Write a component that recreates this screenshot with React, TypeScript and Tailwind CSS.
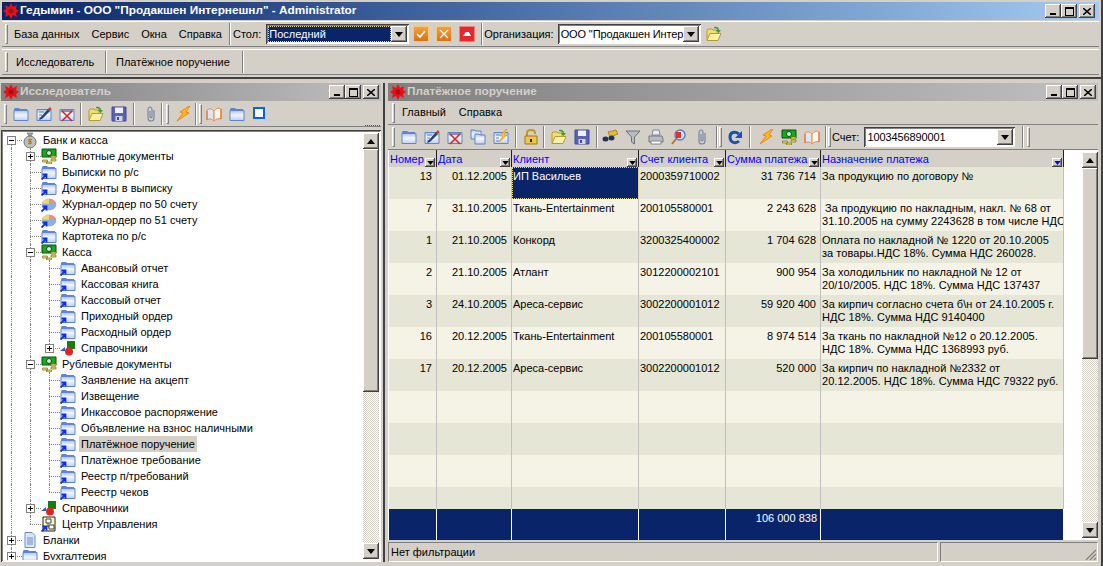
import type { ReactNode } from "react";

const raised =
  "bg-[#d4d0c8] shadow-[inset_-1px_-1px_#404040,inset_1px_1px_#ffffff,inset_-2px_-2px_#808080]";
const sunken = "shadow-[inset_1px_1px_#404040,inset_-1px_-1px_#ffffff,inset_2px_2px_#808080]";

const folderShape = (
  <>
    <path d="M1 5V3l1-1h4l1 1h7v2z" fill="#5a84d8" />
    <path d="M1 4.5h14v10H1z" fill="url(#fld)" stroke="#5f86cf" />
  </>
);

const icons: Record<string, ReactNode> = {
  folder: folderShape,
  edit: (
    <>
      <path d="M1 3.5h14v11H1z" fill="url(#fld)" stroke="#5f86cf" />
      <path d="M3 6h5M3 9h3M3 12h2" stroke="#5f86cf" />
      <path d="M4 12L12 3l2 2-8 8-3 1z" fill="#24407c" />
      <path d="M12 3l2 2 1.5-2L14 1z" fill="#e03020" />
    </>
  ),
  del: (
    <>
      <path d="M1 3.5h14v11H1z" fill="url(#fld)" stroke="#5f86cf" />
      <path d="M2 5h12" stroke="#8a6a9a" strokeWidth="1.5" />
      <path d="M3 5l10 10M13 5L3 15" stroke="#e02018" strokeWidth="1.5" />
    </>
  ),
  copy: (
    <>
      <path d="M1 3V1h4l1 1h5v8H1z" fill="url(#fld)" stroke="#5f86cf" />
      <path d="M5 7V5h4l1 1h5v9H5z" fill="url(#fld)" stroke="#5f86cf" />
    </>
  ),
  boltfolder: (
    <>
      <path d="M1 3.5h14v11H1z" fill="url(#fld)" stroke="#5f86cf" />
      <path d="M3 6h4M3 9h3M3 12h3" stroke="#5f86cf" />
      <path d="M13 0L7 7h3L6 13l8-7h-3l3-6z" fill="#ffc820" stroke="#e07010" strokeWidth=".5" />
    </>
  ),
  open: (
    <>
      <path d="M1 14V4l1-1h4l1 1h4v3" fill="#f5dc70" stroke="#b89a30" />
      <path d="M1 14.5l3-7h11l-3 7z" fill="#fdf0a8" stroke="#b89a30" />
      <path d="M8 1c3-1 5 1 5 3h2l-2.500 3L10 4h1.500c0-1-1.500-2-3.500-2z" fill="#30a030" />
    </>
  ),
  save: (
    <>
      <path d="M1 1h14v14H1z" fill="#5a62b4" stroke="#40489c" />
      <path d="M4 1.500h8V7H4z" fill="#eef0fa" />
      <path d="M4.500 10h7v5h-7z" fill="#d0d4ec" />
      <path d="M6 11h2v3H6z" fill="#40489c" />
    </>
  ),
  clip: (
    <path
      d="M11 4v8c0 2-1 3-3 3s-3-1-3-3V4c0-2 1-3 2-3s2 1 2 3v7c0 1-2 1-2 0V5"
      fill="none"
      stroke="#7488ac"
      strokeWidth="1.2"
    />
  ),
  bolt: <path d="M14 0L5 6l3 1-6 8 12-8-3-1 4-6z" fill="#ffb818" stroke="#ee6a10" strokeWidth=".7" />,
  book: (
    <>
      <path d="M1 4c3-2 5-1 7 1v10c-2-2-4-3-7-1z" fill="#dbe8fa" stroke="#ee8a40" />
      <path d="M15 3c-3-2-5 0-7 2v10c2-2 4-3 7-2z" fill="#fdf6ea" stroke="#ee8a40" />
      <path d="M1 5v9M15 3v10" stroke="#e86c20" />
    </>
  ),
  windows: (
    <>
      <path d="M5 5h10v10H5z" fill="#bcd6fa" />
      <path d="M2 2h10v10H2z" fill="#ffffff" stroke="#1060e0" strokeWidth="2" />
    </>
  ),
  bag: (
    <>
      <path d="M5 1h6l-2 3H7z" fill="#a8a8a0" stroke="#606060" strokeWidth=".6" />
      <circle cx="8" cy="10" r="6" fill="#c0c0b8" stroke="#707070" />
      <path d="M10 7.500H7v2h2v2H6M8 6.500v6" stroke="#c87808" fill="none" strokeWidth="1.2" />
    </>
  ),
  money: (
    <>
      <path d="M1 1h14v8H1z" fill="#18a818" stroke="#065010" />
      <circle cx="8" cy="5" r="2.500" fill="#d0f4d0" stroke="#065010" />
      <path d="M1.500 12h5v2h-5zM5.500 14h5v2h-5zM10 8h5v2h-5zM10 11h5v2h-5z" fill="#eeda50" stroke="#706010" strokeWidth=".6" />
    </>
  ),
  pie: (
    <>
      <ellipse cx="8" cy="8.500" rx="7" ry="5.500" fill="#8cb0e0" stroke="#7a90b0" strokeWidth=".5" />
      <path d="M8 8V3A7 5.500 0 0 0 1 7.500z" fill="#f0d860" />
      <path d="M8 8V3A7 5.500 0 0 1 15 8z" fill="#e09090" />
    </>
  ),
  shapes: (
    <>
      <path d="M7 1h8v8H7z" fill="#108010" />
      <path d="M0 11l5-4v4z" fill="#2060d0" />
      <circle cx="9" cy="11.500" r="4" fill="#e82020" />
    </>
  ),
  center: (
    <>
      <path d="M2 1h12v14H2z" fill="#fffbc0" stroke="#202020" />
      <path d="M5 3h5v4H5zM8 9h5v4H8z" fill="#ffffff" stroke="#404040" />
      <path d="M7 7v4h1" stroke="#404040" fill="none" />
    </>
  ),
  doc: (
    <>
      <path d="M3 .5h7l3 3v12H3z" fill="#dbe6f8" stroke="#6a8cc8" />
      <path d="M5 6h6M5 8h6M5 10h6M5 12h6" stroke="#6a8cc8" />
    </>
  ),
  lock: (
    <>
      <path d="M4 7V4c0-4 8-4 8 0v1" fill="none" stroke="#c09820" strokeWidth="2" />
      <path d="M2 7h12v8H2z" fill="#f0c840" stroke="#a07810" />
      <path d="M7 10h2v3H7z" fill="#302000" />
    </>
  ),
  binoculars: (
    <>
      <path d="M6 3l8-2 2 4-8 3z" fill="#f0b820" stroke="#806010" strokeWidth=".6" />
      <ellipse cx="3.500" cy="10" rx="3" ry="2.500" fill="#203060" />
      <ellipse cx="9.500" cy="9" rx="3" ry="2.500" fill="#203060" />
    </>
  ),
  funnel: <path d="M1 2h14L9.500 8v7l-3-2V8z" fill="#b8bcc4" stroke="#6a7078" />,
  printer: (
    <>
      <path d="M5 1h6l1 5H4z" fill="#e8ecf4" stroke="#808890" />
      <path d="M1 7h13l1 3v3H1z" fill="#b8bcc4" stroke="#707880" />
      <path d="M3 12h10v3H3z" fill="#ffffff" stroke="#808890" />
    </>
  ),
  search: (
    <>
      <circle cx="9" cy="6" r="5" fill="#d8e8f8" stroke="#5080b0" strokeWidth="1.400" />
      <path d="M5 3h5v6H5z" fill="#e03030" />
      <path d="M5 10l-4 5" stroke="#c07020" strokeWidth="2" />
    </>
  ),
  redo: (
    <>
      <path d="M12 12c-3 3-9 2-9-4 0-5 5-6 9-3" fill="none" stroke="#1850b8" strokeWidth="3" />
      <path d="M15 2v7H8z" fill="#1850b8" />
    </>
  ),
};

function Ico({ name, link, className = "" }: { name: string; link?: boolean; className?: string }) {
  return (
    <svg viewBox="0 0 16 16" className={`w-4 h-4 flex-none ${className}`}>
      {icons[name]}
      {link && <path d="M.5 15.500l4-4M1.500 10.500H5.500V14.500" fill="none" stroke="#0830e8" strokeWidth="1.800" />}
    </svg>
  );
}

function Logo() {
  return (
    <svg viewBox="0 0 16 16" className="w-4 h-4 flex-none">
      <path d="M8 0l2 4 4-2-1 4 3 2-3 2 1 4-4-2-2 4-2-4-4 2 1-4-3-2 3-2-1-4 4 2z" fill="#ee1010" />
      <circle cx="8" cy="8" r="2.500" fill="#a01020" />
    </svg>
  );
}

function CaptionButtons() {
  return (
    <div className="flex flex-none items-center">
      <div className={`w-4 h-[14px] flex items-end justify-center pb-[3px] ${raised}`}>
        <div className="w-[6px] h-[2px] bg-black" />
      </div>
      <div className={`w-4 h-[14px] flex items-center justify-center ${raised}`}>
        <div className="w-[9px] h-[9px] border border-black border-t-2" />
      </div>
      <div className={`w-4 h-[14px] ml-[2px] flex items-center justify-center ${raised}`}>
        <svg viewBox="0 0 8 7" className="w-2 h-[7px]">
          <path d="M0 0l8 7M8 0L0 7" stroke="#000" strokeWidth="1.500" />
        </svg>
      </div>
    </div>
  );
}

function TitleBar({ title, active }: { title: string; active?: boolean }) {
  return (
    <div
      className={
        active
          ? "h-[18px] flex items-center pl-[1px] pr-[4px] bg-gradient-to-r from-[#0a246a] to-[#a6caf0] text-white"
          : "h-[18px] flex items-center pl-[2px] pr-[2px] bg-gradient-to-r from-[#808080] to-[#c0c0c0] text-[#d4d0c8]"
      }
    >
      <Logo />
      <span className="ml-[1px] flex-1 text-[11.8px] font-bold whitespace-nowrap">{title}</span>
      <CaptionButtons />
    </div>
  );
}

function Grip({ className = "ml-[3px]" }: { className?: string }) {
  return <div className={`w-[3px] h-[20px] flex-none border border-[#808080] border-t-white border-l-white ${className}`} />;
}

function Sep() {
  return <div className="w-[2px] h-[22px] flex-none border-l border-[#808080] border-r-white border-r" />;
}

function Arrow() {
  return (
    <svg viewBox="0 0 8 5" className="w-2 h-[5px]">
      <path d="M0 0h8L4 5z" fill="#000" />
    </svg>
  );
}

function Combo({ value, width, selected }: { value: string; width: string; selected?: boolean }) {
  return (
    <div className={`h-[20px] flex-none flex items-center p-[2px] bg-white ${sunken} ${width}`}>
      <div
        className={
          selected
            ? "flex-1 h-full flex items-center pl-[1px] bg-[#0a246a] text-white outline-1 outline-dotted outline-[#e8d890] -outline-offset-1 overflow-hidden whitespace-nowrap"
            : "flex-1 min-w-0 h-full flex items-center pl-[1px] bg-white tracking-[-0.12px] whitespace-nowrap overflow-hidden"
        }
      >
        {value}
      </div>
      <div className={`w-[16px] h-full flex-none flex items-center justify-center ${raised}`}>
        <Arrow />
      </div>
    </div>
  );
}

function Scrollbar({ thumb, className = "" }: { thumb: string; className?: string }) {
  return (
    <div className={`w-4 flex flex-col flex-none ${className}`}>
      <div className={`h-4 flex-none flex items-center justify-center ${raised}`}>
        <div className="rotate-180 flex">
          <Arrow />
        </div>
      </div>
      <div className={`flex-none ${thumb} ${raised}`} />
      <div className="flex-1 bg-[repeating-conic-gradient(#d4d0c8_0_25%,#ffffff_0_50%)] bg-[length:2px_2px]" />
      <div className={`h-4 flex-none flex items-center justify-center ${raised}`}>
        <Arrow />
      </div>
    </div>
  );
}

function IconGroup({ names, pad = "px-[6px]" }: { names: string[]; pad?: string }) {
  return (
    <div className={`flex items-center gap-[7px] ${pad}`}>
      {names.map((n, i) => (
        <Ico key={n + i} name={n} />
      ))}
    </div>
  );
}

type TreeRow = {
  label: string;
  level: number;
  icon: string;
  link?: boolean;
  box?: "+" | "-";
  last?: boolean;
  active?: boolean;
};

const treeRows: TreeRow[] = [
  { label: "Банк и касса", level: 0, icon: "bag", box: "-" },
  { label: "Валютные документы", level: 1, icon: "money", box: "+" },
  { label: "Выписки по р/с", level: 1, icon: "folder", link: true },
  { label: "Документы в выписку", level: 1, icon: "folder", link: true },
  { label: "Журнал-ордер по 50 счету", level: 1, icon: "pie", link: true },
  { label: "Журнал-ордер по 51 счету", level: 1, icon: "pie", link: true },
  { label: "Картотека по р/с", level: 1, icon: "folder", link: true },
  { label: "Касса", level: 1, icon: "money", box: "-" },
  { label: "Авансовый отчет", level: 2, icon: "folder", link: true },
  { label: "Кассовая книга", level: 2, icon: "folder", link: true },
  { label: "Кассовый отчет", level: 2, icon: "folder", link: true },
  { label: "Приходный ордер", level: 2, icon: "folder", link: true },
  { label: "Расходный ордер", level: 2, icon: "folder", link: true },
  { label: "Справочники", level: 2, icon: "shapes", box: "+", last: true },
  { label: "Рублевые документы", level: 1, icon: "money", box: "-" },
  { label: "Заявление на акцепт", level: 2, icon: "folder", link: true },
  { label: "Извещение", level: 2, icon: "folder", link: true },
  { label: "Инкассовое распоряжение", level: 2, icon: "folder", link: true },
  { label: "Объявление на взнос наличными", level: 2, icon: "folder", link: true },
  { label: "Платёжное поручение", level: 2, icon: "folder", link: true, active: true },
  { label: "Платёжное требование", level: 2, icon: "folder", link: true },
  { label: "Реестр п/требований", level: 2, icon: "folder", link: true },
  { label: "Реестр чеков", level: 2, icon: "folder", link: true, last: true },
  { label: "Справочники", level: 1, icon: "shapes", box: "+" },
  { label: "Центр Управления", level: 1, icon: "center", link: true, last: true },
  { label: "Бланки", level: 0, icon: "doc", box: "+" },
  { label: "Бухгалтерия", level: 0, icon: "folder", box: "+" },
];

function Tree() {
  return (
    <div className="flex-1 overflow-hidden">
      {treeRows.map((r, i) => (
        <div key={i} className="h-4 flex pl-[8px]">
          {Array.from({ length: r.level }).map((_, g) => (
            <div key={g} className="w-[19px] h-4 flex-none border-l border-dotted border-[#808080]" />
          ))}
          <div className="w-[11px] h-4 flex-none relative">
            {i > 0 && <div className={`border-l border-dotted border-[#808080] ${r.last ? "h-2" : "h-4"}`} />}
            {i === 0 && <div className="absolute top-2 h-2 left-0 border-l border-dotted border-[#808080]" />}
            <div className="absolute left-0 right-0 top-2 border-t border-dotted border-[#808080]" />
            {r.box && (
              <div className="absolute -left-1 top-1 w-[9px] h-[9px] bg-white border border-[#808080] flex items-center justify-center">
                <div className="relative w-[5px] h-[5px]">
                  <div className="absolute left-0 top-[2px] w-[5px] h-px bg-black" />
                  {r.box === "+" && <div className="absolute left-[2px] top-0 w-px h-[5px] bg-black" />}
                </div>
              </div>
            )}
          </div>
          <Ico name={r.icon} link={r.link} />
          <span className={`ml-[3px] h-4 px-[2px] leading-4 whitespace-nowrap ${r.active ? "bg-[#d4d0c8]" : ""}`}>
            {r.label}
          </span>
        </div>
      ))}
    </div>
  );
}

const headers = [
  { label: "Номер", w: "w-[48px]" },
  { label: "Дата", w: "w-[75px]" },
  { label: "Клиент", w: "w-[127px]" },
  { label: "Счет клиента", w: "w-[87px]" },
  { label: "Сумма платежа", w: "w-[95px]" },
  { label: "Назначение платежа", w: "w-[243px]", sorted: true },
];

const rows: string[][] = [
  ["13", "01.12.2005", "ИП Васильев", "2000359710002", "31 736 714", "За продукцию по договору №"],
  ["7", "31.10.2005", "Ткань-Entertainment", "200105580001", "2 243 628", "\u00a0За продукцию по накладным, накл. № 68 от\n31.10.2005 на сумму 2243628 в том числе НДС"],
  ["1", "21.10.2005", "Конкорд", "3200325400002", "1 704 628", "Оплата по накладной № 1220 от 20.10.2005\nза товары.НДС 18%. Сумма НДС 260028."],
  ["2", "21.10.2005", "Атлант", "3012200002101", "900 954", "За холодильник по накладной № 12 от\n20/10/2005. НДС 18%. Сумма НДС 137437"],
  ["3", "24.10.2005", "Ареса-сервис", "3002200001012", "59 920 400", "За кирпич согласно счета б\\н от 24.10.2005 г.\nНДС 18%. Сумма НДС 9140400"],
  ["16", "20.12.2005", "Ткань-Entertainment", "200105580001", "8 974 514", "За ткань по накладной №12 о 20.12.2005.\nНДС 18%. Сумма НДС 1368993 руб."],
  ["17", "20.12.2005", "Ареса-сервис", "3002200001012", "520 000", "За кирпич по накладной №2332 от\n20.12.2005. НДС 18%. Сумма НДС 79322 руб."],
  ["", "", "", "", "", ""],
  ["", "", "", "", "", ""],
  ["", "", "", "", "", ""],
  ["", "", "", "", "", ""],
];

function Grid() {
  return (
    <div className="w-[675px] ml-[1px] flex-none flex flex-col">
      <div className="flex h-[17px] bg-[#d4d0c8] text-[#0000ff]">
        {headers.map((h) => (
          <div
            key={h.label}
            className={`${h.w} flex-none flex pt-[1px] border-r border-[#202020] pl-[1px] whitespace-nowrap relative overflow-hidden`}
          >
            {h.label}
            <div className={`absolute right-[1px] bottom-0 w-[10px] h-[9px] flex items-center justify-center ${raised}`}>
              <svg viewBox="0 0 8 5" className="w-[7px] h-1">
                <path d="M0 0h8L4 5z" fill={h.sorted ? "#0000ff" : "#000"} />
              </svg>
            </div>
          </div>
        ))}
      </div>
      {rows.map((r, i) => (
        <div key={i} className={`flex ${i === 10 ? "h-[22px]" : "h-[32px]"} ${i % 2 === 0 ? "bg-[#e5e6d5]" : "bg-[#f5f2e6]"}`}>
          {r.map((c, j) => (
            <div
              key={j}
              className={`${headers[j].w} flex-none border-r border-[#c0c0c0] pt-[3px] leading-[13px] whitespace-pre overflow-hidden ${
                j < 2 || j === 4 ? "text-right pr-[4px]" : "pl-[1px]"
              } ${j === 5 ? "tracking-[0.05px]" : ""} ${
                i === 0 && j === 2 ? "bg-[#0a246a] text-white outline-1 outline-dotted outline-[#e8d890] -outline-offset-1" : ""
              }`}
            >
              {c}
            </div>
          ))}
        </div>
      ))}
      <div className="flex flex-1 bg-[#0a246a] text-white">
        {headers.map((h, j) => (
          <div key={h.label} className={`${h.w} flex-none border-r border-white pt-[3px] leading-[13px] text-right pr-[3px]`}>
            {j === 4 ? "106 000 838" : ""}
          </div>
        ))}
      </div>
    </div>
  );
}

export default function App() {
  return (
    <div className="w-[1103px] h-[566px] overflow-hidden bg-[#d4d0c8] text-[11px] text-black flex flex-col font-['Liberation_Sans',sans-serif] border-r-2 border-[#404040]">
      <svg className="absolute w-0 h-0">
        <defs>
          <linearGradient id="fld" x1="0" y1="0" x2="0" y2="1">
            <stop offset="0" stopColor="#a9c4ee" />
            <stop offset="0.45" stopColor="#f2f6fd" />
            <stop offset="1" stopColor="#bdd0ee" />
          </linearGradient>
        </defs>
      </svg>

      <div className="pt-[2px] px-[2px]">
        <TitleBar title={'Гедымин - ООО "Продакшен Интернешнл" - Administrator'} active />
      </div>

      <div className="h-[26px] mt-[1px] flex-none flex items-center border-y border-t-white border-b-[#808080] mx-[2px]">
        <Grip />
        <div className="flex gap-[12px] pl-[6px] w-[221px] whitespace-nowrap">
          <span>База данных</span>
          <span>Сервис</span>
          <span>Окна</span>
          <span>Справка</span>
        </div>
        <Sep />
        <span className="ml-[2px] mr-[5px]">Стол:</span>
        <Combo value="Последний" width="w-[143px]" selected />
        <div className="flex gap-[7px] px-[4px]">
          <div className="w-4 h-4 bg-gradient-to-b from-[#f2a03c] to-[#d87210] border border-[#f8c878] flex items-center justify-center">
            <svg viewBox="0 0 10 10" className="w-[10px] h-[10px]">
              <path d="M1 5l3 3 5-6" fill="none" stroke="#fff" strokeWidth="1.600" />
            </svg>
          </div>
          <div className="w-4 h-4 bg-gradient-to-b from-[#f2a03c] to-[#d87210] border border-[#f8c878] flex items-center justify-center">
            <svg viewBox="0 0 10 10" className="w-[10px] h-[10px]">
              <path d="M1 1l8 8M9 1l-8 8" stroke="#fff" strokeWidth="1.200" />
            </svg>
          </div>
          <div className="w-4 h-4 bg-[#e82828] border border-[#f08080] flex items-center justify-center">
            <div className="w-2 h-1 bg-white [clip-path:polygon(30%_0,70%_0,100%_100%,0_100%)]" />
          </div>
        </div>
        <div className="ml-[2px]">
          <Sep />
        </div>
        <span className="ml-[1px] mr-[4px]">Организация:</span>
        <Combo value={'ООО "Продакшен Интер'} width="w-[143px]" />
        <Ico name="open" className="ml-[5px]" />
      </div>

      <div className="h-[26px] mt-[2px] mx-[2px] flex-none flex items-center border-y border-t-white border-b-[#808080]">
        <Grip />
        <span className="pl-[8px] w-[97px]">Исследователь</span>
        <Sep />
        <span className="pl-[9px] w-[135px]">Платёжное поручение</span>
        <Sep />
      </div>

      <div className="flex-1 flex min-h-0 mt-[2px] border-t-2 border-[#404040] pt-[4px] pb-[4px] pr-[3px]">
        {/* левое окно: дерево */}
        <div className="w-[385px] flex-none flex flex-col pl-[1px] pr-[2px] border-r-2 border-[#404040]">
          <TitleBar title="Исследователь" />
          <div className="h-[26px] flex-none flex items-center border-b border-[#808080]">
            <Grip />
            <IconGroup names={["folder", "edit", "del"]} pad="pl-[6px] pr-[5px]" />
            <Sep />
            <IconGroup names={["open", "save"]} />
            <Sep />
            <IconGroup names={["clip"]} pad="pl-[8px] pr-[2px]" />
            <Sep />
            <Grip />
            <IconGroup names={["bolt"]} pad="pl-[6px] pr-[4px]" />
            <Sep />
            <Grip className="ml-[2px]" />
            <IconGroup names={["book", "folder", "windows"]} pad="pl-[4px]" />
            <div className="ml-auto mr-[1px] self-end w-[15px] border-t border-dotted border-[#1060d0]" />
          </div>
          <div className={`flex-1 min-h-0 flex bg-white mt-[3px] p-[2px] ${sunken}`}>
            <Tree />
            <Scrollbar thumb="h-[243px]" className="my-[1px]" />
          </div>
        </div>

        {/* правое окно: таблица */}
        <div className="flex-1 min-w-0 flex flex-col ml-[3px]">
          <TitleBar title="Платёжное поручение" />
          <div className="h-[24px] flex-none flex items-center border-b border-[#808080] pl-[1px]">
            <Grip />
            <div className="flex gap-[13px] pl-[7px]">
              <span>Главный</span>
              <span>Справка</span>
            </div>
          </div>
          <div className="h-[25px] flex-none flex items-center border-b border-[#808080] pl-[1px]">
            <Grip />
            <IconGroup names={["folder", "edit", "del", "copy", "boltfolder"]} />
            <Sep />
            <IconGroup names={["lock"]} pad="pl-[6px] pr-[4px]" />
            <Sep />
            <IconGroup names={["open", "save"]} />
            <Sep />
            <IconGroup names={["binoculars", "funnel", "printer", "search", "clip"]} pad="pl-[4px] pr-[6px]" />
            <Sep />
            <Grip className="ml-[1px]" />
            <IconGroup names={["redo"]} pad="pl-[5px] pr-[6px]" />
            <Sep />
            <IconGroup names={["bolt", "money", "book"]} pad="pl-[7px] pr-[5px]" />
            <Sep />
            <Grip className="ml-[1px]" />
            <span className="ml-[1px] mr-[5px]">Счет:</span>
            <Combo value="1003456890001" width="w-[151px]" />
            <div className="ml-[7px]">
              <Sep />
            </div>
            <Grip />
          </div>
          <div className="flex-1 min-h-0 flex bg-white">
            <Grid />
            <div className="flex-1" />
            <Scrollbar thumb="h-[191px]" className="py-[2px]" />
          </div>
          <div className="h-[20px] flex-none mt-[2px] flex items-stretch">
            <div className="w-[550px] flex items-center pl-[2px] border border-[#808080] border-r-white border-b-white">
              Нет фильтрации
            </div>
            <div className="flex-1 ml-[2px] flex items-end justify-end border border-[#808080] border-r-white border-b-white">
              <svg viewBox="0 0 12 12" className="w-3 h-3">
                <path d="M11 1L1 11M11 5l-6 6M11 9l-2 2" stroke="#808080" strokeWidth="1.200" />
              </svg>
            </div>
          </div>
        </div>
      </div>
    </div>
  );
}
